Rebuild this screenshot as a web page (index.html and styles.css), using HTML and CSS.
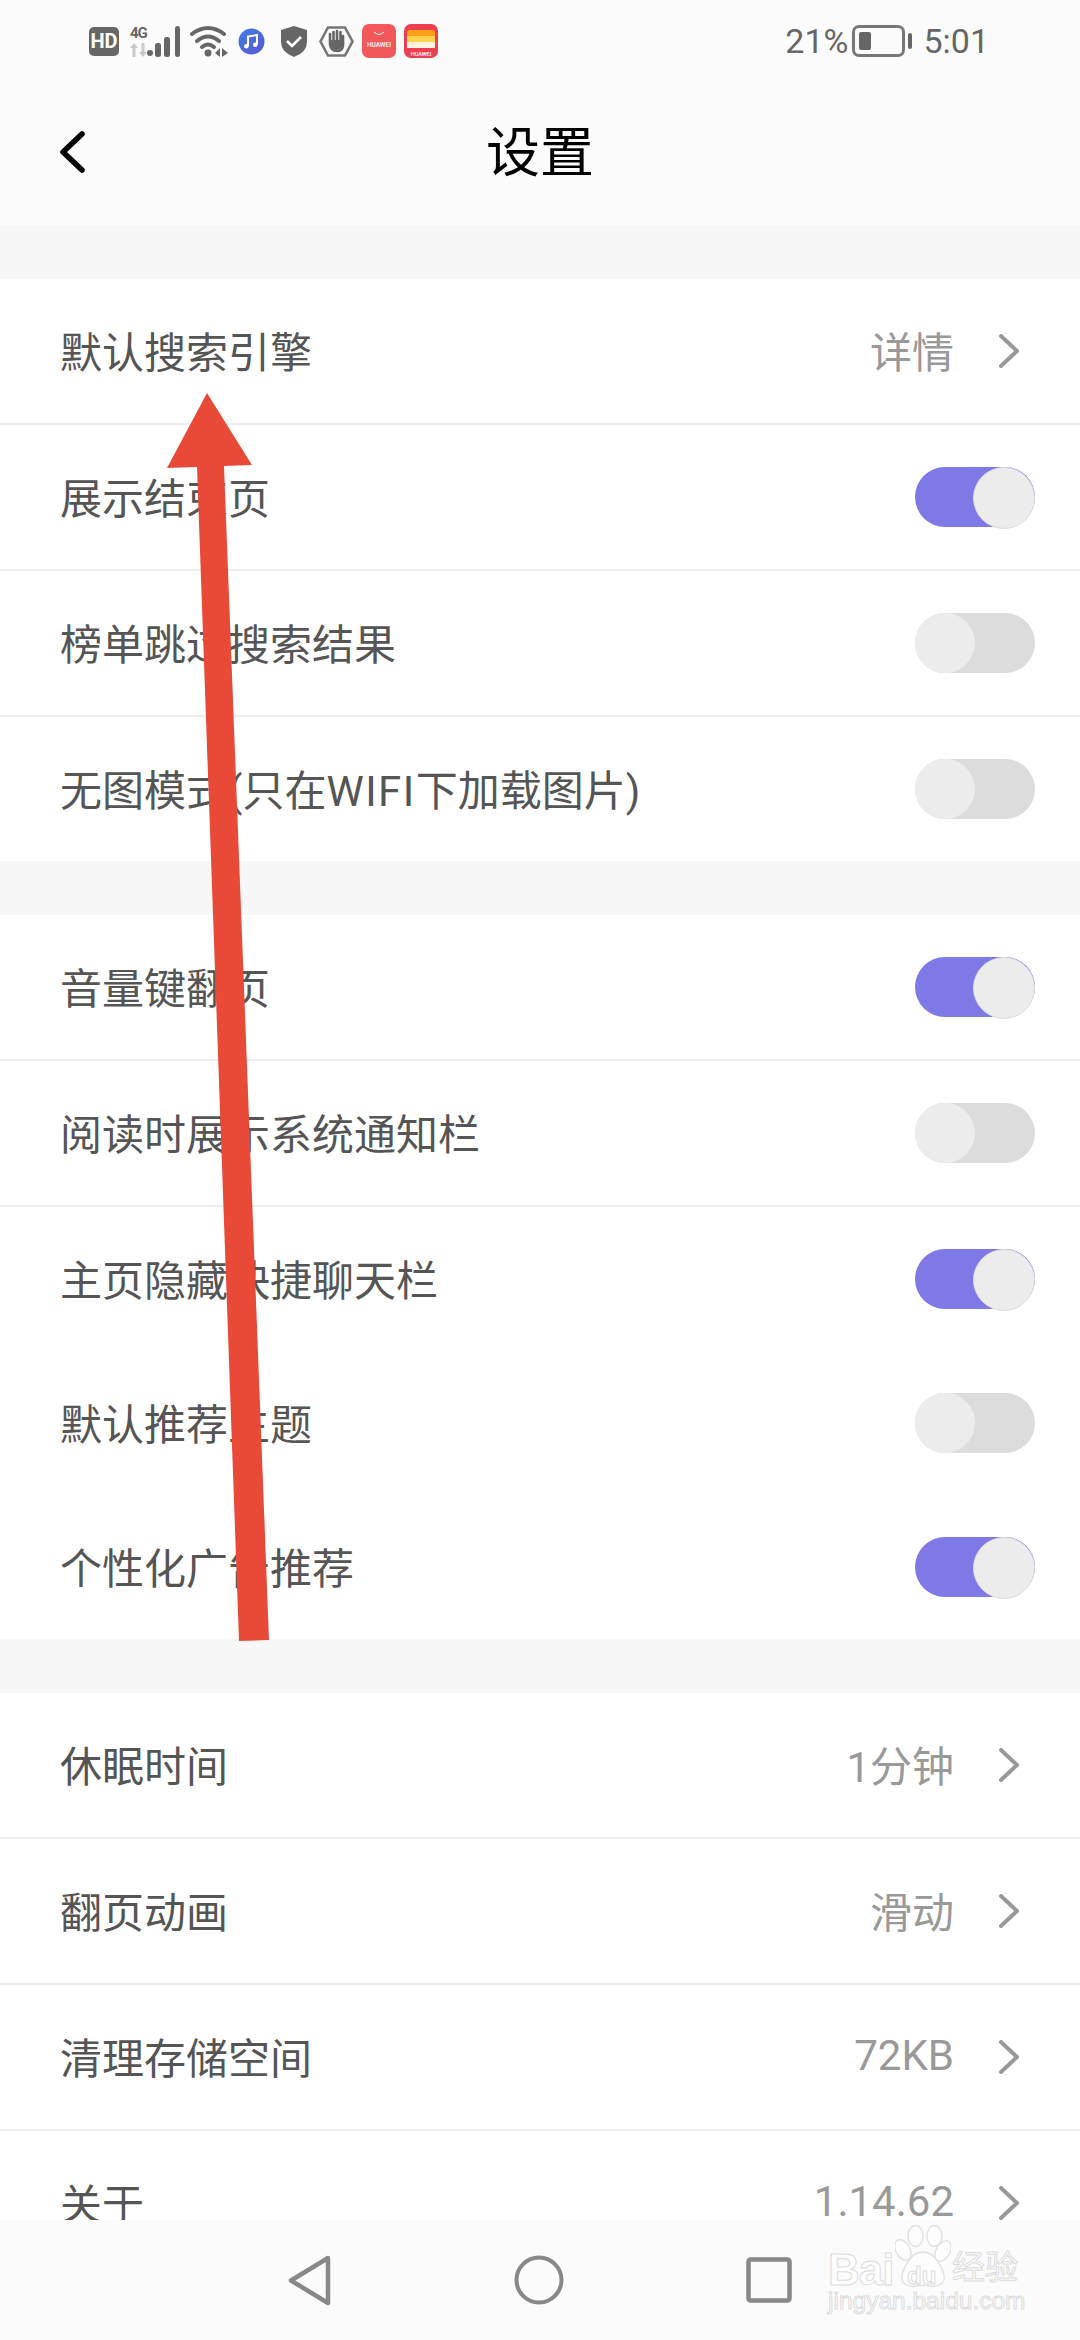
FILE: index.html
```html
<!DOCTYPE html>
<html lang="zh">
<head>
<meta charset="utf-8">
<title>设置</title>
<link rel="stylesheet" href="styles.css">
</head>
<body>
<div class="phone">
  <div class="statusbar">
    <div class="status-left">
      <span class="hd">HD</span>
      <div class="net">
        <div class="net-text">
          <span class="g4">4G</span>
          <svg class="updown" width="17" height="14" viewBox="0 0 17 14"><path d="M4 0 L8 5 H5.5 V14 H2.5 V5 H0 Z M13 14 L9 9 H11.5 V0 H14.5 V9 H17 Z" fill="#c9c9c9"/></svg>
        </div>
        <svg class="bars" width="34" height="31" viewBox="0 0 34 31"><circle cx="3" cy="27" r="3" fill="#666"/><rect x="8" y="17" width="6" height="14" rx="2.5" fill="#666"/><rect x="17" y="11" width="6" height="20" rx="2.5" fill="#666"/><rect x="28" y="0" width="5" height="31" rx="2.5" fill="#666"/></svg>
      </div>
      <svg class="wifi" width="38" height="32" viewBox="0 0 38 32"><path d="M2 9 Q18 -3 34 9" fill="none" stroke="#666" stroke-width="4" stroke-linecap="round"/><path d="M7 16 Q18 7 29 16" fill="none" stroke="#666" stroke-width="4" stroke-linecap="round"/><path d="M12 22 Q18 17 24 22" fill="none" stroke="#666" stroke-width="4" stroke-linecap="round"/><circle cx="18" cy="28" r="3.5" fill="#666"/><path d="M25 28 L30 23 V32 Z M32 23 L38 28 L32 32 Z" fill="#666"/></svg>
      <svg class="music" width="27" height="27" viewBox="0 0 27 27"><defs><linearGradient id="mg" x1="0" y1="0" x2="1" y2="1"><stop offset="0" stop-color="#3f7fe0"/><stop offset="1" stop-color="#5b55d6"/></linearGradient></defs><circle cx="13.5" cy="13.5" r="13" fill="url(#mg)"/><path d="M10 18 V8.5 L19 7 V16.5" fill="none" stroke="#fff" stroke-width="2"/><circle cx="8.3" cy="18.3" r="2.3" fill="#fff"/><circle cx="17.3" cy="16.8" r="2.3" fill="#fff"/></svg>
      <svg class="shield" width="26" height="31" viewBox="0 0 26 31"><path d="M13 0 L26 4 V16 Q26 26 13 31 Q0 26 0 16 V4 Z" fill="#666"/><path d="M6 15 L11 20 L20 11" fill="none" stroke="#fff" stroke-width="2.6"/></svg>
      <svg class="hand" width="35" height="31" viewBox="0 0 35 31"><path d="M9 1.5 H26 L33.5 15.5 L26 29.5 H9 L1.5 15.5 Z" fill="none" stroke="#777" stroke-width="2.6"/><path d="M11 12 V18 Q12 25 18 25 Q23 25 24 20 V10 M11 14 V8 M14.5 15 V6 M18 15 V5 M21.5 15 V6" fill="none" stroke="#666" stroke-width="2.6" stroke-linecap="round"/><path d="M12 14 H23 V21 Q21 24 18 24 Q13 24 12 19 Z" fill="#666"/></svg>
      <div class="app app-a">
        <svg class="smile" width="12" height="5" viewBox="0 0 12 5"><path d="M1 1 Q6 6 11 1" fill="none" stroke="#fff" stroke-width="1"/></svg>
        <span>HUAWEI</span>
      </div>
      <div class="app app-b">
        <div class="stripes"><i class="s1"></i><i class="s2"></i><i class="s3"></i></div>
        <span>HUAWEI</span>
      </div>
    </div>
    <div class="status-right">
      <span>21%</span>
      <div class="battery"><div class="batt-body"><i></i></div><div class="batt-tip"></div></div>
      <span class="clock">5:01</span>
    </div>
  </div>

  <header class="header">
    <svg class="back" width="28" height="46" viewBox="0 0 28 46"><path d="M24 5 L5 23 L24 41" fill="none" stroke="#000" stroke-width="5.5" stroke-linecap="round" stroke-linejoin="round"/></svg>
    <h1>设置</h1>
  </header>

  <main class="content">
    <section class="group">
      <div class="row line"><span class="label">默认搜索引擎</span><span class="value">详情</span><svg class="chev" width="20" height="34" viewBox="0 0 20 34"><path d="M2 2 L18 17 L2 32" fill="none" stroke="#999" stroke-width="4" stroke-linecap="round" stroke-linejoin="round"/></svg></div>
      <div class="row line"><span class="label">展示结束页</span><span class="toggle on"></span></div>
      <div class="row line"><span class="label">榜单跳过搜索结果</span><span class="toggle"></span></div>
      <div class="row"><span class="label">无图模式(只在<span class="latin">WIFI</span>下加载图片)</span><span class="toggle"></span></div>
    </section>
    <section class="group">
      <div class="row line"><span class="label">音量键翻页</span><span class="toggle on"></span></div>
      <div class="row line"><span class="label">阅读时展示系统通知栏</span><span class="toggle"></span></div>
      <div class="row"><span class="label">主页隐藏快捷聊天栏</span><span class="toggle on"></span></div>
      <div class="row"><span class="label">默认推荐主题</span><span class="toggle"></span></div>
      <div class="row"><span class="label">个性化广告推荐</span><span class="toggle on"></span></div>
    </section>
    <section class="group">
      <div class="row line"><span class="label">休眠时间</span><span class="value">1分钟</span><svg class="chev" width="20" height="34" viewBox="0 0 20 34"><path d="M2 2 L18 17 L2 32" fill="none" stroke="#999" stroke-width="4" stroke-linecap="round" stroke-linejoin="round"/></svg></div>
      <div class="row line"><span class="label">翻页动画</span><span class="value">滑动</span><svg class="chev" width="20" height="34" viewBox="0 0 20 34"><path d="M2 2 L18 17 L2 32" fill="none" stroke="#999" stroke-width="4" stroke-linecap="round" stroke-linejoin="round"/></svg></div>
      <div class="row line"><span class="label">清理存储空间</span><span class="value">72KB</span><svg class="chev" width="20" height="34" viewBox="0 0 20 34"><path d="M2 2 L18 17 L2 32" fill="none" stroke="#999" stroke-width="4" stroke-linecap="round" stroke-linejoin="round"/></svg></div>
      <div class="row"><span class="label">关于</span><span class="value">1.14.62</span><svg class="chev" width="20" height="34" viewBox="0 0 20 34"><path d="M2 2 L18 17 L2 32" fill="none" stroke="#999" stroke-width="4" stroke-linecap="round" stroke-linejoin="round"/></svg></div>
    </section>
  </main>

  <nav class="navbar">
    <svg width="44" height="51" viewBox="0 0 44 51"><path d="M40 3 L3 25.5 L40 48 Z" fill="none" stroke="#888" stroke-width="4.5" stroke-linejoin="round"/></svg>
    <svg width="50" height="50" viewBox="0 0 50 50"><circle cx="25" cy="25" r="22.5" fill="none" stroke="#888" stroke-width="4"/></svg>
    <svg width="46" height="46" viewBox="0 0 46 46"><rect x="2.5" y="2.5" width="41" height="41" rx="2" fill="none" stroke="#888" stroke-width="4.5"/></svg>
  </nav>

  <svg class="arrow" width="1080" height="2340" viewBox="0 0 1080 2340"><polygon points="207,393 252,465 224,466 269,1640 239,1641 197,467 167,468" fill="#e94a38"/></svg>

  <div class="watermark">
    <div class="wm-top">
      <span class="wm-text wm-bai">Bai</span>
      <svg class="paw" width="56" height="63" viewBox="0 0 56 63"><g fill="#fdfdfd" stroke="#e2e2e2" stroke-width="1.5"><ellipse cx="8" cy="25" rx="7" ry="11" transform="rotate(-30 8 25)"/><ellipse cx="20.5" cy="11" rx="7.5" ry="10.5"/><ellipse cx="39.5" cy="11" rx="7.5" ry="10.5"/><ellipse cx="48" cy="26" rx="7" ry="11" transform="rotate(30 48 26)"/><path d="M28 27 Q38 27 45 40 Q56 60 38 61.5 Q28 59 18 61.5 Q0 60 11 40 Q18 27 28 27 Z"/></g></svg>
      <span class="wm-text wm-du">du</span>
      <span class="wm-text wm-cn">经验</span>
    </div>
    <div class="wm-text wm-url">jingyan.baidu.com</div>
  </div>
</div>
</body>
</html>
```

FILE: styles.css
```css
* { box-sizing: border-box; margin: 0; padding: 0; }
html, body { width: 1080px; height: 2340px; overflow: hidden; background: #fff; }
body { font-family: Roboto, "Noto Sans CJK SC", sans-serif; }

.phone { position: relative; width: 1080px; height: 2340px; display: flex; flex-direction: column; overflow: hidden; background: #f7f7f7; }

.statusbar { height: 82px; flex: none; display: flex; justify-content: space-between; align-items: center; padding: 0 91px 0 89px; background: #fbfbfb; color: #666; }
.status-left { display: flex; align-items: center; }
.hd { width: 30px; height: 29px; border-radius: 5px; background: #666; color: #fff; font-size: 20px; font-weight: 700; line-height: 29px; text-align: center; margin-right: 11px; }
.net { display: flex; align-items: flex-end; height: 31px; }
.net-text { display: flex; flex-direction: column; width: 17px; }
.g4 { font-size: 15px; font-weight: 700; line-height: 14px; letter-spacing: -1px; margin-bottom: 3px; height: 14px; }
.updown { display: block; }
.wifi { margin-left: 9px; }
.music { margin-left: 10px; }
.shield { margin-left: 16px; }
.hand { margin-left: 12px; }
.app { width: 34px; height: 34px; border-radius: 7px; display: flex; flex-direction: column; align-items: center; color: #fff; overflow: hidden; }
.app span { font-size: 5.5px; line-height: 7px; font-weight: 500; }
.app-a { margin-left: 8px; background: #f2575a; padding-top: 7px; gap: 6px; }
.app-a span { font-size: 6.5px; }
.app-b { margin-left: 8px; background: #ee3f50; padding-top: 6px; }
.stripes { width: 28px; display: flex; flex-direction: column; border-radius: 3px 3px 0 0; overflow: hidden; margin-bottom: 3px; }
.stripes i { display: block; height: 6px; }
.stripes .s1 { background: #ff9f1a; }
.stripes .s2 { background: #ffd24d; }
.stripes .s3 { background: #fff3e0; }
.status-right { display: flex; align-items: center; font-size: 34px; font-weight: 400; }
.battery { display: flex; align-items: center; margin-left: 4px; gap: 3px; }
.batt-body { width: 53px; height: 32px; border: 3px solid #777; border-radius: 7px; padding: 4px; }
.batt-body i { display: block; width: 12px; height: 100%; background: #666; border-radius: 2px; }
.batt-tip { width: 4px; height: 16px; background: #666; border-radius: 2px; }
.clock { margin-left: 11px; }

.header { height: 143px; flex: none; position: relative; display: flex; align-items: center; justify-content: center; background: #fbfbfb; }
.header h1 { font-size: 54px; font-weight: 400; color: #000; line-height: 1; }
.back { position: absolute; left: 58px; top: 47px; }

.content { flex: 1; min-height: 0; overflow: hidden; display: flex; flex-direction: column; gap: 54px; padding-top: 54px; }
.group { flex: none; background: #fff; display: flex; flex-direction: column; }
.row { height: 144px; flex: none; display: flex; align-items: center; padding: 0 45px 0 60px; color: #555; font-size: 42px; }
.row.line { height: 146px; border-bottom: 2px solid #ededed; }
.label { flex: 1; white-space: nowrap; margin-bottom: 3px; }
.latin { letter-spacing: 1.5px; }
.value { color: #999; margin-right: 45px; margin-bottom: 3px; }
.chev { margin-right: 16px; flex: none; }

.toggle { width: 120px; height: 60px; border-radius: 30px; background: #dcdcdc; display: flex; justify-content: flex-start; }
.toggle::after { content: ""; width: 60px; height: 60px; border-radius: 50%; background: #ececec; }
.toggle.on { background: #7e79e6; justify-content: flex-end; }
.toggle.on::after { border: 1px solid #dcdcdc; }

.navbar { height: 120px; flex: none; background: #fbfbfb; display: flex; align-items: center; padding: 0 288px; justify-content: space-between; }

.arrow { position: absolute; left: 0; top: 0; pointer-events: none; }

.watermark { position: absolute; left: 828px; top: 2224px; width: 200px; }
.wm-top { display: flex; align-items: flex-end; position: relative; height: 68px; }
.wm-text { color: #fdfdfd; -webkit-text-stroke: 1px #dcdcdc; font-family: "Liberation Sans", "Noto Sans CJK SC", sans-serif; font-weight: 700; }
.wm-bai { font-size: 44px; line-height: 44px; letter-spacing: -1px; }
.paw { position: absolute; left: 67px; top: 1px; }
.wm-du { position: absolute; left: 79px; top: 39px; font-size: 24px; line-height: 26px; }
.wm-cn { position: absolute; left: 124px; top: 27px; font-size: 33px; line-height: 34px; font-weight: 400; white-space: nowrap; }
.wm-url { font-size: 24.5px; line-height: 30px; font-weight: 400; white-space: nowrap; margin-top: -6px; }
```
